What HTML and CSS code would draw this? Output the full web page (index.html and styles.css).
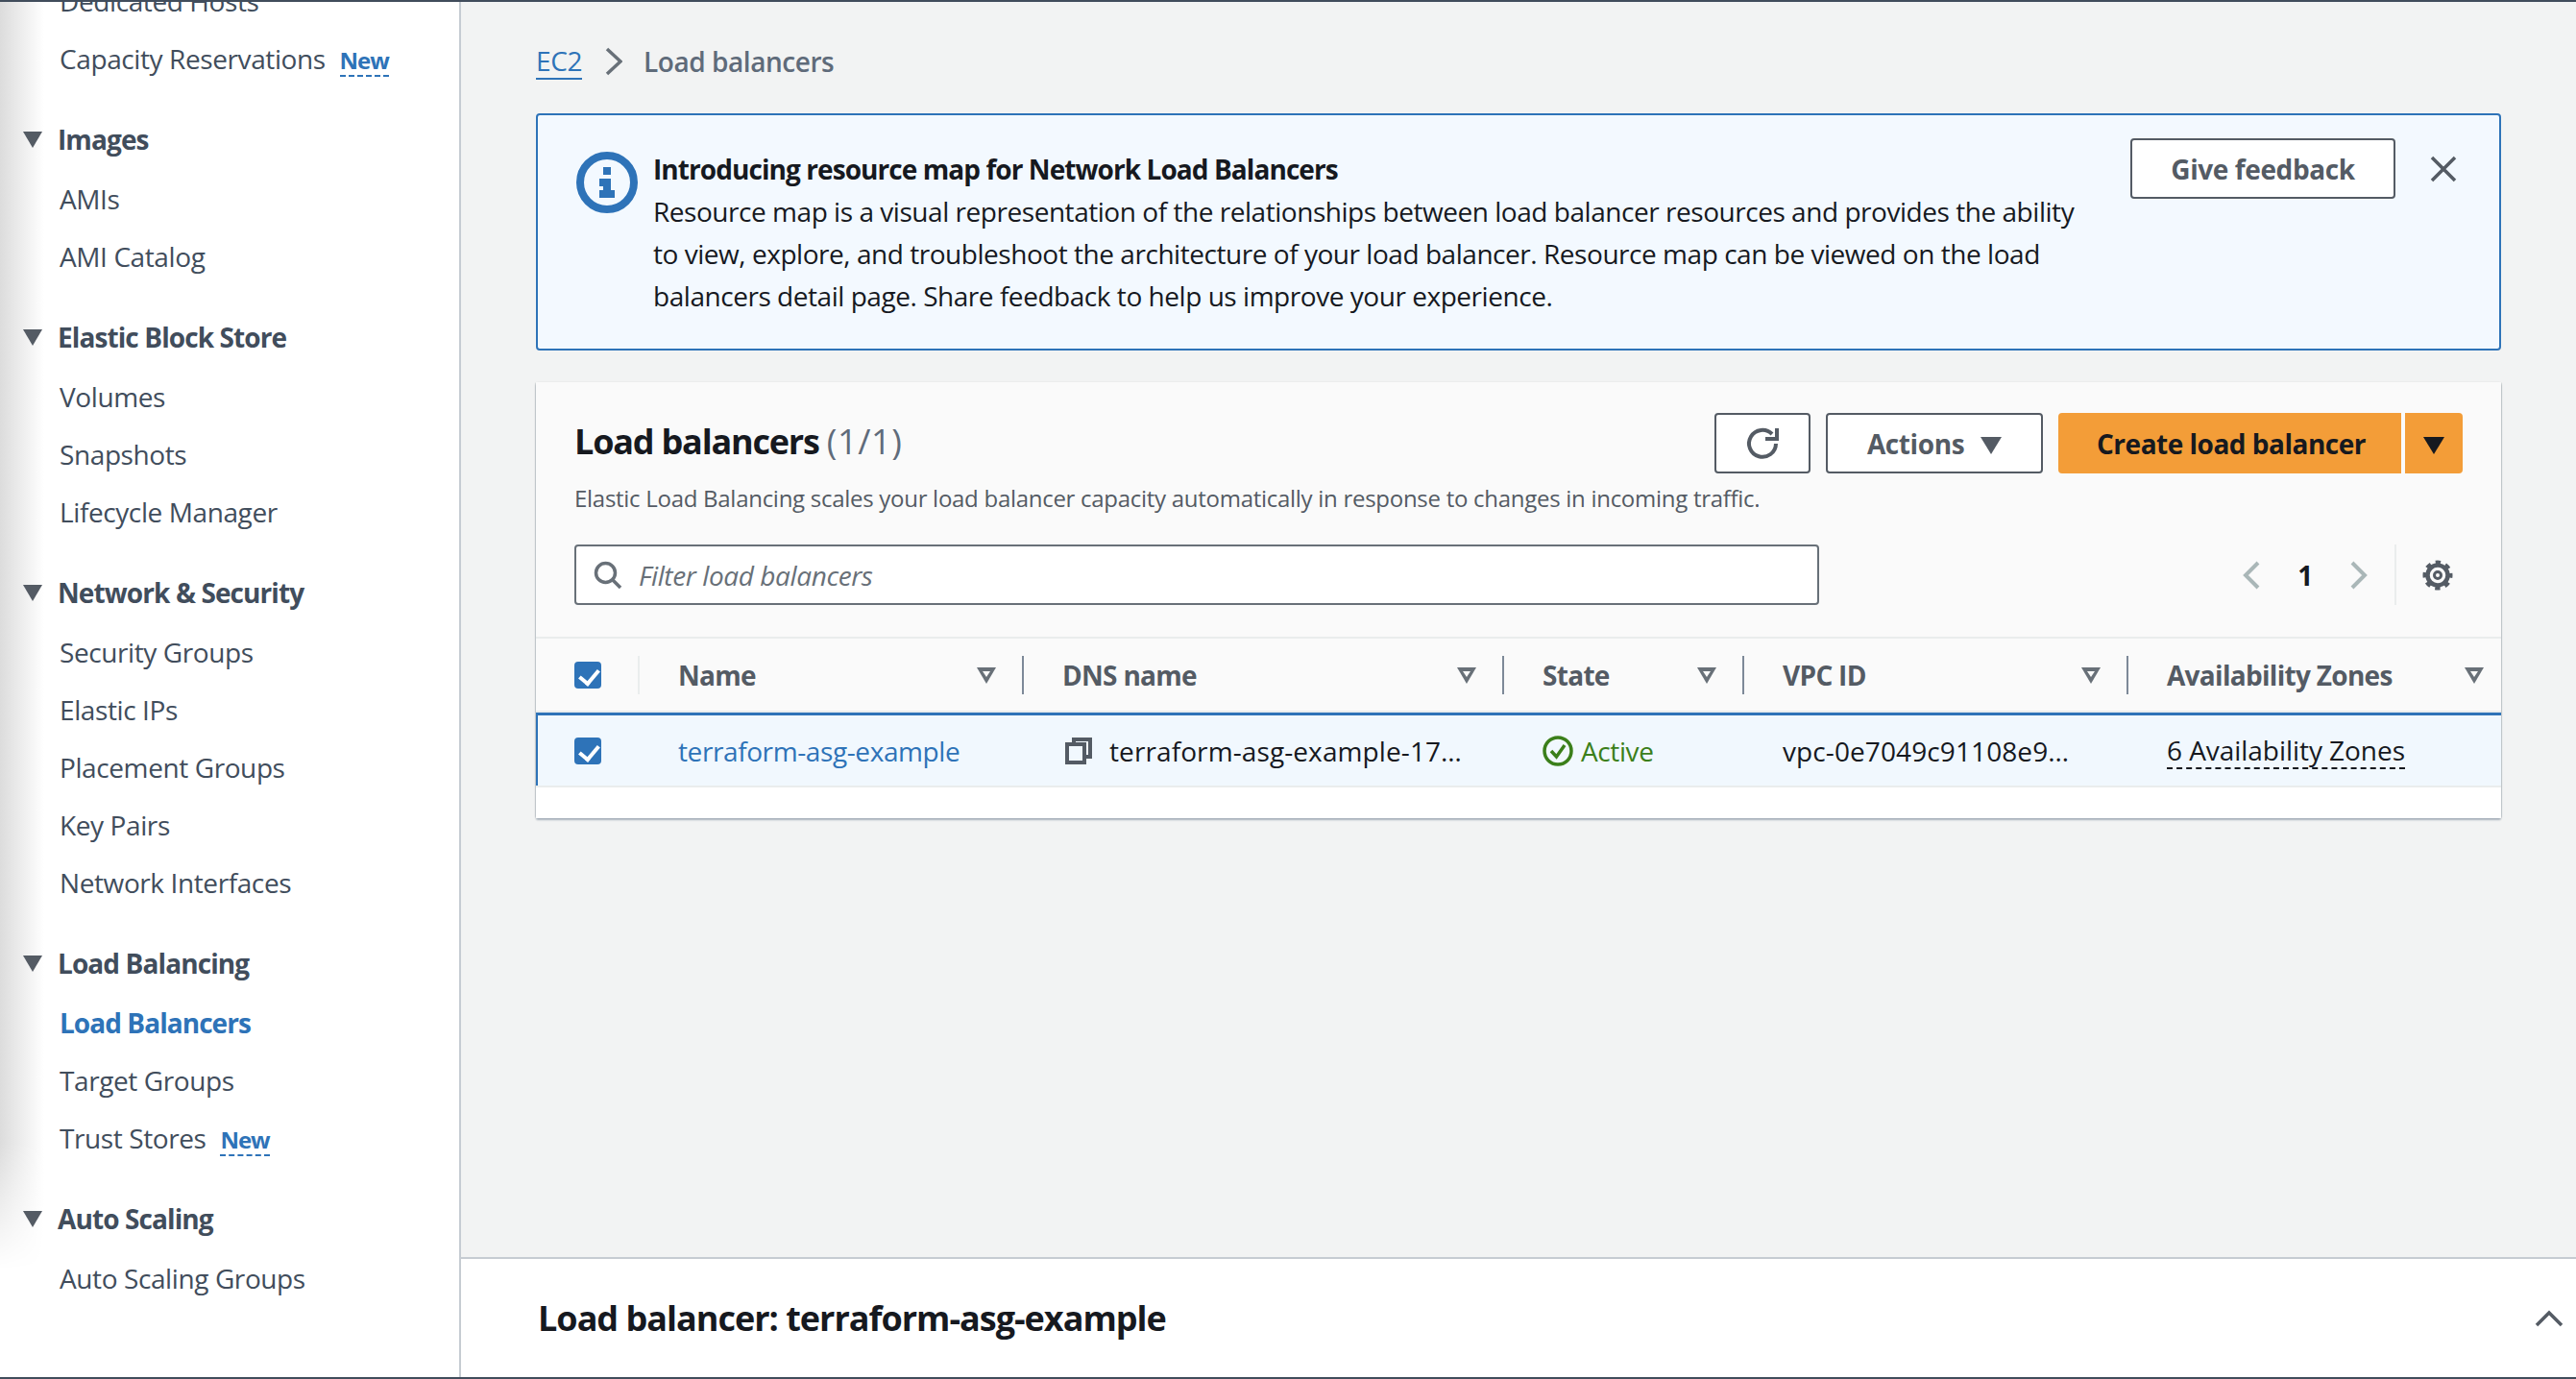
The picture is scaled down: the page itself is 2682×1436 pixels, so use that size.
FILE: index.html
```html
<!DOCTYPE html>
<html lang="en">
<head>
    <meta charset="UTF-8">
    <title>Load balancers | EC2</title>
    <link rel="stylesheet" href="styles.css">
</head>
<body>
    <div class="app">
        <nav class="sidebar">
            <ul class="nav-list nav-top">
                <li>Dedicated Hosts</li>
                <li>Capacity Reservations <span class="new">New</span></li>
            </ul>
            <h3 class="nav-head"><i class="caret"></i>Images</h3>
            <ul class="nav-list">
                <li>AMIs</li>
                <li>AMI Catalog</li>
            </ul>
            <h3 class="nav-head"><i class="caret"></i>Elastic Block Store</h3>
            <ul class="nav-list">
                <li>Volumes</li>
                <li>Snapshots</li>
                <li>Lifecycle Manager</li>
            </ul>
            <h3 class="nav-head"><i class="caret"></i>Network &amp; Security</h3>
            <ul class="nav-list">
                <li>Security Groups</li>
                <li>Elastic IPs</li>
                <li>Placement Groups</li>
                <li>Key Pairs</li>
                <li>Network Interfaces</li>
            </ul>
            <h3 class="nav-head"><i class="caret"></i>Load Balancing</h3>
            <ul class="nav-list">
                <li class="active">Load Balancers</li>
                <li>Target Groups</li>
                <li>Trust Stores <span class="new">New</span></li>
            </ul>
            <h3 class="nav-head"><i class="caret"></i>Auto Scaling</h3>
            <ul class="nav-list">
                <li>Auto Scaling Groups</li>
            </ul>
        </nav>

        <div class="main">
            <div class="content">
                <div class="breadcrumb">
                    <a class="crumb-link">EC2</a>
                    <svg class="crumb-sep" viewBox="0 0 18 30"><path d="M2 2l14 13L2 28"/></svg>
                    <span class="crumb-current">Load balancers</span>
                </div>

                <div class="alert">
                    <svg class="alert-icon" viewBox="0 0 64 64">
                        <circle cx="32" cy="32" r="28" fill="none" stroke="#2e73b8" stroke-width="8"/>
                        <path d="M28 16h8v8h-8zM24 28h12v12h4v8H24v-8h4v-4h-4z" fill="#2e73b8"/>
                    </svg>
                    <div class="alert-text">
                        <strong>Introducing resource map for Network Load Balancers</strong>
                        <p>Resource map is a visual representation of the relationships between load balancer resources and provides the ability<br>to view, explore, and troubleshoot the architecture of your load balancer. Resource map can be viewed on the load<br>balancers detail page. Share feedback to help us improve your experience.</p>
                    </div>
                    <button class="btn feedback">Give feedback</button>
                    <svg class="alert-close" viewBox="0 0 28 28"><path d="M2 2l24 24M26 2L2 26"/></svg>
                </div>

                <section class="card">
                    <div class="card-top">
                        <div class="title-row">
                            <h1>Load balancers <span class="count">(1/1)</span></h1>
                            <div class="actions">
                                <button class="btn refresh">
                                    <svg viewBox="0 0 36 36"><path d="M32 18a14 14 0 1 1-4-10"/><path d="M21 13h12V2"/></svg>
                                </button>
                                <button class="btn actions-btn">Actions <i class="tri"></i></button>
                                <div class="split">
                                    <button class="btn primary">Create load balancer</button>
                                    <button class="btn primary split-arrow"><i class="tri"></i></button>
                                </div>
                            </div>
                        </div>
                        <p class="card-desc">Elastic Load Balancing scales your load balancer capacity automatically in response to changes in incoming traffic.</p>
                        <div class="filter-row">
                            <div class="search">
                                <svg viewBox="0 0 30 30"><circle cx="12.500" cy="12.500" r="10"/><path d="M20 20l8 8"/></svg>
                                <span>Filter load balancers</span>
                            </div>
                            <div class="pager">
                                <svg class="pager-arrow" viewBox="0 0 18 30"><path d="M16 2L3 15l13 13"/></svg>
                                <b>1</b>
                                <svg class="pager-arrow" viewBox="0 0 18 30"><path d="M2 2l13 13L2 28"/></svg>
                                <span class="pager-sep"></span>
                                <svg class="gear" viewBox="0 0 32 32">
                                    <circle class="gear-teeth" cx="16" cy="16" r="13.500"/>
                                    <circle class="gear-body" cx="16" cy="16" r="10.500"/>
                                    <circle class="gear-hub" cx="16" cy="16" r="3.500"/>
                                </svg>
                            </div>
                        </div>
                    </div>

                    <div class="tbl-row tbl-head">
                        <div class="cell check-cell"><i class="check"></i></div>
                        <div class="cell">Name<i class="sort"></i></div>
                        <div class="cell">DNS name<i class="sort"></i></div>
                        <div class="cell">State<i class="sort"></i></div>
                        <div class="cell">VPC ID<i class="sort"></i></div>
                        <div class="cell">Availability Zones<i class="sort"></i></div>
                    </div>
                    <div class="tbl-row tbl-body">
                        <div class="cell check-cell"><i class="check"></i></div>
                        <div class="cell"><a class="lb-link">terraform-asg-example</a></div>
                        <div class="cell">
                            <svg class="copy" viewBox="0 0 28 28"><path d="M9 7V2h17v18h-6"/><rect x="2" y="7" width="18" height="19"/></svg>
                            <span class="wide">terraform-asg-example-17…</span>
                        </div>
                        <div class="cell state">
                            <svg viewBox="0 0 32 32"><circle cx="16" cy="16" r="14"/><path d="M9 16l5.500 6L23 10"/></svg>
                            Active
                        </div>
                        <div class="cell wide">vpc-0e7049c91108e9…</div>
                        <div class="cell"><span class="dotted">6 Availability Zones</span></div>
                    </div>
                    <div class="card-foot"></div>
                </section>
            </div>

            <footer class="drawer">
                <h2>Load balancer: terraform-asg-example</h2>
                <svg viewBox="0 0 30 18"><path d="M2 16L15 3l13 13"/></svg>
            </footer>
        </div>
    </div>
</body>
</html>
```

FILE: styles.css
```css
* {
    box-sizing: border-box;
}
html, body {
    margin: 0;
    height: 100%;
}
body {
    font-family: "Open Sans", "Noto Sans", sans-serif;
    font-size: 28px;
    letter-spacing: -0.4px;
    color: #16191f;
    background-color: #f2f3f3;
    overflow: hidden;
}
.app {
    display: flex;
    height: 1436px;
    border-top: 2px solid #414d5c;
    border-bottom: 2px solid #414d5c;
    overflow: hidden;
}

/* left nav */
.sidebar {
    position: relative;
    width: 480px;
    flex-shrink: 0;
    padding-left: 62px;
    background-color: white;
    border-right: 2px solid #c6ccd2;
    overflow: hidden;
    color: #414d5c;
}
.sidebar::before {
    content: "";
    position: absolute;
    top: 0;
    left: 0;
    width: 46px;
    height: 1320px;
    background: linear-gradient(to right, #dcdcdc, #ffffff);
    -webkit-mask-image: linear-gradient(to bottom, black 90%, transparent);
}
.nav-list {
    list-style: none;
    margin: 0;
    padding: 0;
}
.nav-list li {
    height: 60px;
    line-height: 60px;
    white-space: nowrap;
}
.nav-top {
    margin-top: -31px;
}
.nav-list li.active {
    color: #2e73b8;
    font-weight: 700;
    letter-spacing: -0.95px;
}
.new {
    display: inline-block;
    margin-left: 8px;
    font-size: 24px;
    line-height: 30px;
    font-weight: 700;
    letter-spacing: -1px;
    color: #2e73b8;
    border-bottom: 2px dashed #2e73b8;
}
.nav-head {
    position: relative;
    height: 60px;
    line-height: 60px;
    margin: 24px 0 2px -2px;
    font-size: 28px;
    font-weight: 700;
    letter-spacing: -0.9px;
}
.caret {
    position: absolute;
    left: -36px;
    top: 22px;
    border-top: 17px solid #545b64;
    border-left: 10px solid transparent;
    border-right: 10px solid transparent;
}

/* main column */
.main {
    flex: 1;
    display: flex;
    flex-direction: column;
    min-width: 0;
}
.content {
    flex: 1;
    padding: 0 78px 0 78px;
}
.breadcrumb {
    display: flex;
    align-items: center;
    height: 116px;
    padding-top: 8px;
}
.crumb-link {
    color: #2e73b8;
    border-bottom: 2px solid #2e73b8;
    line-height: 36px;
}
.crumb-sep {
    width: 18px;
    height: 30px;
    margin: 0 22px 0 24px;
}
.crumb-sep path {
    fill: none;
    stroke: #687078;
    stroke-width: 3.5;
}
.pager-arrow path {
    fill: none;
    stroke: #aab7b8;
    stroke-width: 4;
}
.crumb-current {
    color: #5f6b7a;
    font-weight: 600;
    letter-spacing: -0.45px;
}

/* info banner */
.alert {
    display: flex;
    height: 247px;
    padding: 24px 44px 0 40px;
    background-color: #f3f9ff;
    border: 2px solid #2e73b8;
    border-radius: 4px;
}
.alert-icon {
    width: 64px;
    height: 64px;
    flex-shrink: 0;
    margin: 14px 16px 0 0;
}
.alert-text {
    flex: 1;
    line-height: 44px;
    padding-top: 10px;
}
.alert-text strong {
    font-weight: 700;
    letter-spacing: -0.93px;
}
.alert-text p {
    margin: 0;
    letter-spacing: -0.46px;
}
.btn {
    font-family: inherit;
    font-size: 28px;
    font-weight: 700;
    letter-spacing: -0.4px;
    color: #545b64;
    background-color: white;
    border: 2px solid #545b64;
    border-radius: 4px;
    padding: 0;
    height: 63px;
}
.feedback {
    width: 276px;
    flex-shrink: 0;
}
.alert-close {
    width: 28px;
    height: 28px;
    margin: 18px 0 0 36px;
    flex-shrink: 0;
}
.alert-close path {
    fill: none;
    stroke: #545b64;
    stroke-width: 3.5;
}

/* table card */
.card {
    margin-top: 33px;
    background-color: white;
    border-radius: 2px;
    box-shadow: 0 2px 2px rgba(0,31,63,0.3), 1px 0 1px rgba(0,28,36,0.15), -1px 0 1px rgba(0,28,36,0.15);
}
.card-top {
    height: 265px;
    padding: 32px 40px 0;
    background-color: #fafafa;
}
.title-row {
    display: flex;
    justify-content: space-between;
    height: 63px;
}
h1 {
    margin: 0;
    font-size: 36px;
    line-height: 60px;
    font-weight: 700;
    letter-spacing: -1.2px;
}
.count {
    font-weight: 400;
    color: #5f6b7a;
    letter-spacing: 0.6px;
}
.actions {
    display: flex;
    gap: 16px;
}
.refresh {
    width: 100px;
}
.refresh svg {
    display: block;
    width: 36px;
    height: 36px;
    margin: 0 auto;
}
.refresh path {
    fill: none;
    stroke: #545b64;
    stroke-width: 4;
}
.actions-btn {
    width: 226px;
}
.tri {
    display: inline-block;
    margin-left: 10px;
    border-top: 18px solid #545b64;
    border-left: 11px solid transparent;
    border-right: 11px solid transparent;
}
.split {
    display: flex;
    gap: 4px;
}
.primary {
    width: 357px;
    padding-left: 3px;
    letter-spacing: -0.5px;
    color: #16191f;
    background-color: #f39d38;
    border-color: #f39d38;
    border-radius: 4px 0 0 4px;
}
.split-arrow {
    width: 60px;
    padding-left: 0;
    border-radius: 0 4px 4px 0;
}
.split-arrow .tri {
    margin: 0;
    border-top-color: #16191f;
}
.card-desc {
    margin: 6px 0 0;
    font-size: 24px;
    line-height: 40px;
    letter-spacing: -0.28px;
    color: #545b64;
}
.filter-row {
    display: flex;
    justify-content: space-between;
    margin-top: 28px;
}
.search {
    display: flex;
    align-items: center;
    width: 1296px;
    height: 63px;
    padding-left: 18px;
    background-color: white;
    border: 2px solid #687078;
    border-radius: 4px;
    color: #687078;
    font-style: italic;
}
.search svg {
    width: 30px;
    height: 30px;
    margin-right: 17px;
}
.search svg * {
    fill: none;
    stroke: #687078;
    stroke-width: 3.500;
}
.pager {
    display: flex;
    align-items: center;
    height: 63px;
    margin-right: 10px;
}
.pager b {
    width: 94px;
    text-align: center;
    color: #16191f;
    font-size: 28px;
}
.pager-arrow {
    width: 18px;
    height: 30px;
}
.pager-sep {
    width: 2px;
    height: 63px;
    margin-left: 28px;
    background-color: #eaeded;
}
.gear {
    width: 32px;
    height: 32px;
    margin-left: 27px;
}
.gear * {
    fill: none;
    stroke: #545b64;
}
.gear-teeth {
    stroke-width: 4;
    stroke-dasharray: 5.300 5.300;
    stroke-dashoffset: 2.650;
}
.gear-body {
    stroke-width: 4.500;
}
.gear-hub {
    stroke-width: 3;
}

/* table */
.tbl-row {
    display: grid;
    grid-template-columns: 108px 400px 500px 250px 400px 388px;
    align-items: center;
}
.tbl-head {
    height: 79px;
    background-color: #fafafa;
    border-top: 2px solid #eaeded;
    border-bottom: 2px solid #eaeded;
    font-weight: 700;
    letter-spacing: -0.7px;
    color: #545b64;
}
.tbl-body {
    height: 78px;
    background-color: #f1f8fe;
    border-top: 3px solid #2e73b8;
    border-bottom: 2px solid #eaeded;
    box-shadow: inset 2px 0 0 #2e73b8;
}
.cell {
    display: flex;
    align-items: center;
    height: 40px;
    padding: 0 27px 0 40px;
    white-space: nowrap;
}
.tbl-head .cell {
    border-right: 2px solid #7d8998;
}
.tbl-head .cell.check-cell {
    border-right: 2px solid #eaeded;
}
.tbl-head .cell:last-child {
    border-right: none;
    padding-right: 18px;
}
.check {
    position: relative;
    display: block;
    width: 28px;
    height: 28px;
    border-radius: 4px;
    background-color: #2e73b8;
}
.check::after {
    content: "";
    position: absolute;
    left: 9px;
    top: 4px;
    width: 9px;
    height: 16px;
    border: solid white;
    border-width: 0 4px 4px 0;
    transform: rotate(40deg);
}
.sort {
    position: relative;
    margin-left: auto;
    width: 20px;
    height: 16px;
    border-top: 14px solid transparent;
}
.sort::before {
    content: "";
    position: absolute;
    left: 0;
    top: -14px;
    border-top: 17px solid #687078;
    border-left: 10px solid transparent;
    border-right: 10px solid transparent;
}
.sort::after {
    content: "";
    position: absolute;
    left: 6px;
    top: -10px;
    border-top: 6px solid #fafafa;
    border-left: 4px solid transparent;
    border-right: 4px solid transparent;
}
.lb-link {
    color: #2e73b8;
}
.wide {
    letter-spacing: 0.1px;
}
.copy {
    width: 28px;
    height: 28px;
    margin: 0 18px 0 3px;
    flex-shrink: 0;
}
.copy * {
    fill: none;
    stroke: #545b64;
    stroke-width: 4;
}
.state {
    color: #3b7f1a;
    gap: 8px;
}
.state svg {
    width: 32px;
    height: 32px;
}
.state svg * {
    fill: none;
    stroke: #3b7f1a;
    stroke-width: 3.500;
}
.dotted {
    border-bottom: 2px dashed #16191f;
    line-height: 36px;
    letter-spacing: -0.05px;
}
.card-foot {
    height: 32px;
    background-color: white;
}

/* split panel */
.drawer {
    display: flex;
    align-items: center;
    justify-content: space-between;
    height: 125px;
    padding: 0 13px 0 80px;
    background-color: white;
    border-top: 2px solid #c6ccd2;
}
.drawer h2 {
    margin: 0;
    font-size: 36px;
    font-weight: 700;
    letter-spacing: -1px;
}
.drawer svg {
    width: 30px;
    height: 18px;
}
.drawer svg path {
    fill: none;
    stroke: #545b64;
    stroke-width: 3.500;
}
```
